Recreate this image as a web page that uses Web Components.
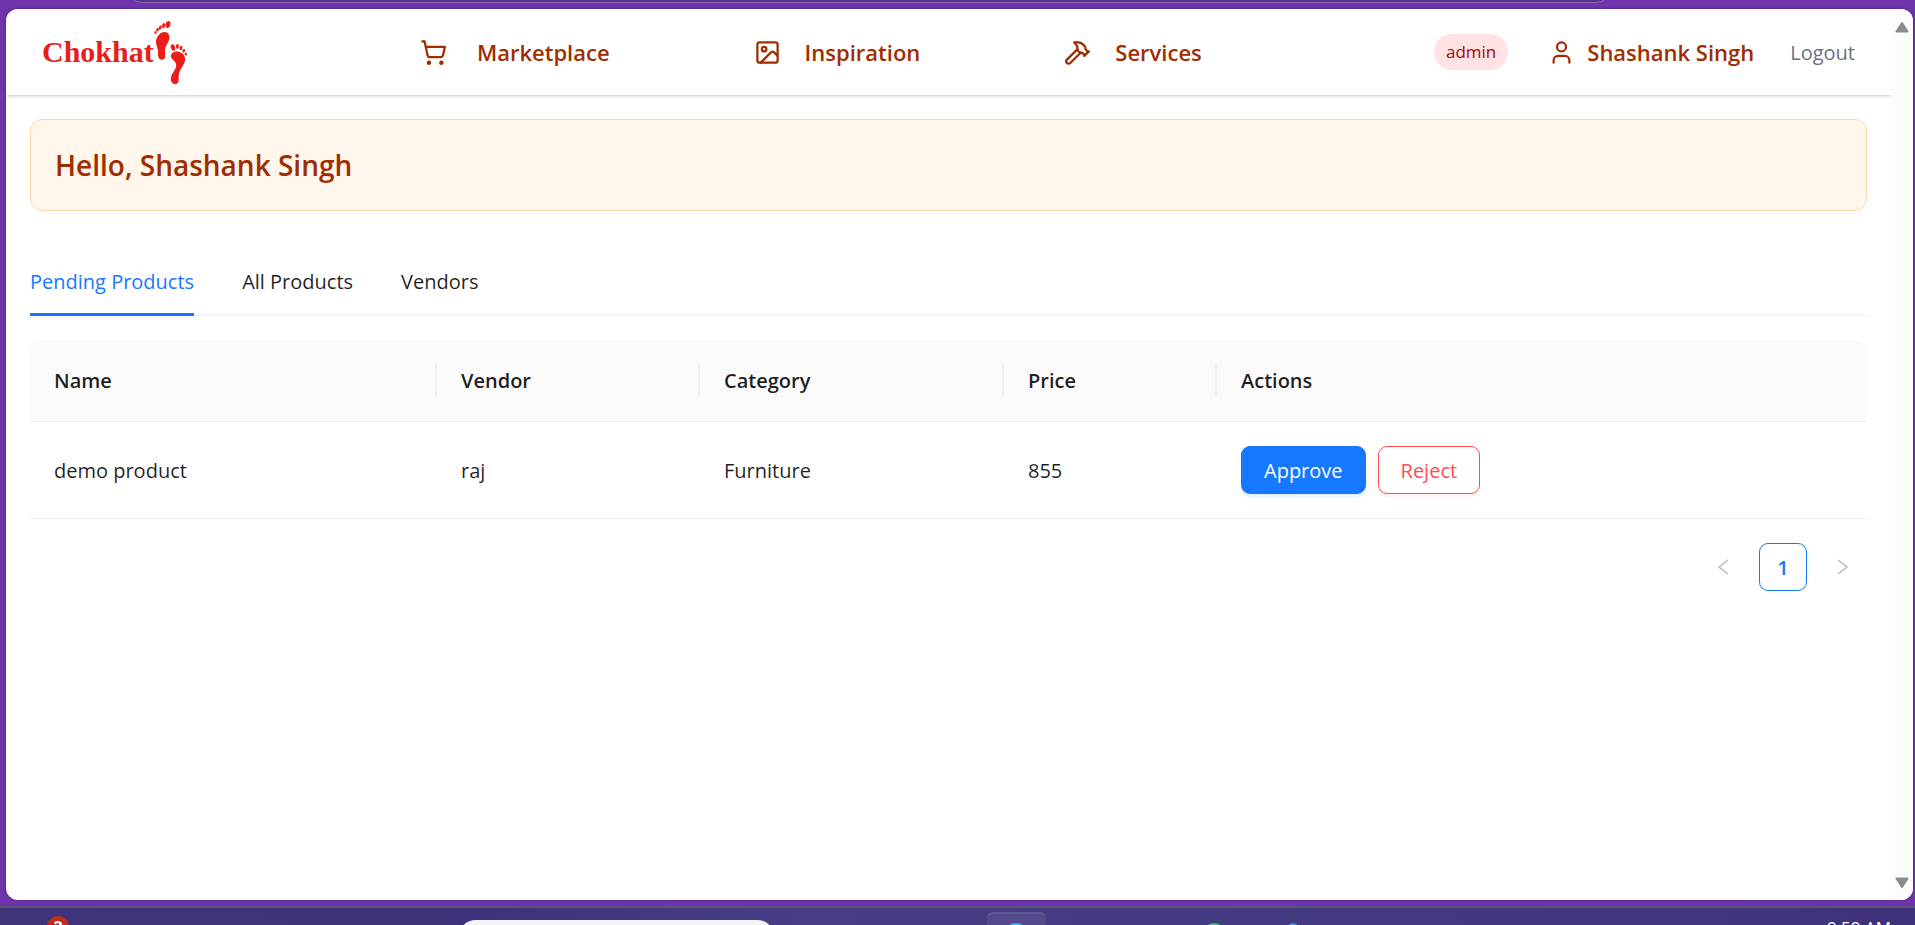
<!DOCTYPE html>
<html lang="en">
<head>
<meta charset="utf-8">
<title>Chokhat - Admin dashboard</title>
<style>
  html, body { margin: 0; height: 100%; }
  body { font-family: "Open Sans", "Noto Sans", sans-serif; color: rgba(0,0,0,.88); overflow: hidden; }
</style>
</head>
<body>
<app-shell>
  <site-header slot="page"></site-header>
  <main slot="page">
    <greeting-banner>Hello, Shashank Singh</greeting-banner>
    <product-tabs></product-tabs>
    <product-table></product-table>
    <page-nav></page-nav>
  </main>
  <task-bar slot="taskbar"></task-bar>
</app-shell>

<script>
const define = (name, html) => customElements.define(name, class extends HTMLElement {
  constructor() {
    super();
    const t = document.createElement('template');
    t.innerHTML = html;
    this.attachShadow({ mode: 'open' }).appendChild(t.content.cloneNode(true));
  }
});

define('app-shell', `
<style>
  :host { display: flex; flex-direction: column; height: 100vh; overflow: hidden; background: #6f34ab; }
  .frame { height: 9px; overflow: hidden; display: flex; align-items: flex-end; }
  .address { flex: 1; height: 32px; margin: 0 303px 6px 126px; box-sizing: border-box; background: #5b2f8e; border: 1px solid #8b6caf; border-radius: 16px; }
  .view { flex: 1; min-height: 0; display: flex; margin: 0 2px 6px 6px; background: #fff; border-radius: 12px; overflow: hidden; box-shadow: 0 0 3px rgba(40,10,80,.5); }
  .page { flex: 1; min-width: 0; }
  .scroll { width: 22px; background: #fcfcfc; display: flex; flex-direction: column; justify-content: space-between; align-items: center; padding: 12px 0 11px; box-sizing: border-box; }
  svg { display: block; }
  ::slotted(main) { display: block; padding: 24px 24px 0; }
</style>
<div class="frame" aria-hidden="true"><div class="address"></div></div>
<div class="view">
  <div class="page"><slot name="page"></slot></div>
  <div class="scroll" aria-hidden="true">
    <svg width="14" height="12" viewBox="0 0 14 12"><path d="M7 2 L12.500 10.500 H1.500 Z" fill="#8b8b8b" stroke="#8b8b8b" stroke-width="2" stroke-linejoin="round"/></svg>
    <svg width="14" height="12" viewBox="0 0 14 12"><path d="M7 10 L12.500 1.500 H1.500 Z" fill="#8b8b8b" stroke="#8b8b8b" stroke-width="2" stroke-linejoin="round"/></svg>
  </div>
</div>
<slot name="taskbar"></slot>`);

define('brand-logo', `
<style>
  :host { display: block; }
  a { display: flex; align-items: center; text-decoration: none; color: #ea1d18; height: 64px; }
  span { font: bold 30px/36px "Liberation Serif", serif; }
  svg { display: block; }
</style>
<a href="#"><span>Chokhat</span>
<svg width="34" height="64" viewBox="0 0 34 64" fill="#ea1d18" aria-hidden="true">
  <path d="M2 21C3 12 13 9 15 15C17 21 11 25 11 30C11 34 12 38 10 39C7 41 4 39 4 35C5 30 2 26 2 21Z"/>
  <ellipse cx="14" cy="4.500" rx="2.400" ry="3.600" transform="rotate(12 14 4.500)"/>
  <ellipse cx="9.600" cy="5.500" rx="1.500" ry="2.500" transform="rotate(15 9.600 5.500)"/>
  <ellipse cx="6.200" cy="7.500" rx="1.400" ry="2.200" transform="rotate(25 6.200 7.500)"/>
  <ellipse cx="3.500" cy="9.800" rx="1.300" ry="1.800" transform="rotate(30 3.500 9.800)"/>
  <ellipse cx="1.500" cy="12.500" rx="1.100" ry="1.500"/>
  <path d="M17 35C19 29 30 31 31 38C32 44 26 48 25 54C24 58 26 63 22 64C18 65 16 60 17 57C19 51 23 49 22 44C21 40 16 39 17 35Z"/>
  <ellipse cx="19" cy="27.500" rx="2.200" ry="3.300" transform="rotate(-15 19 27.500)"/>
  <ellipse cx="23.400" cy="26.500" rx="1.500" ry="2.400"/>
  <ellipse cx="27" cy="28" rx="1.400" ry="2.200" transform="rotate(10 27 28)"/>
  <ellipse cx="29.800" cy="30.700" rx="1.300" ry="1.800" transform="rotate(20 29.800 30.700)"/>
  <ellipse cx="31.800" cy="34" rx="1.200" ry="1.500"/>
</svg></a>`);

define('nav-link', `
<style>
  :host { display: block; }
  a { display: flex; align-items: center; gap: var(--gap, 24px); color: #9f2d00; text-decoration: none; font-size: 22px; font-weight: 600; line-height: 36px; white-space: nowrap; }
  ::slotted(svg) { display: block; width: 27px; height: 27px; fill: none; stroke: currentColor; stroke-width: 2; stroke-linecap: round; stroke-linejoin: round; }
</style>
<a href="#"><slot name="icon"></slot><slot></slot></a>`);

define('site-header', `
<style>
  :host { display: block; background: #fff; box-shadow: 0 1px 5px rgba(0,0,0,.12), 0 1px 2px rgba(0,0,0,.12); }
  header { display: flex; align-items: center; justify-content: space-between; height: 86px; padding: 0 36px; box-sizing: border-box; }
  nav { display: flex; gap: 144px; }
  nav nav-link:first-child { --gap: 30px; }
  .user { display: flex; align-items: center; }
  .role { padding: 0 12px; border-radius: 18px; background: #ffe2e2; color: #9f0712; font-size: 17px; line-height: 36px; }
  .user nav-link { --gap: 12px; margin: 0 36px 0 40px; }
  button { border: 0; padding: 2px 0 0; background: none; font: 20px/36px "Open Sans", sans-serif; color: #6a7282; }
</style>
<header>
  <brand-logo></brand-logo>
  <nav aria-label="Main">
    <nav-link><svg slot="icon" viewBox="0 0 24 24"><circle cx="8" cy="21" r="1"/><circle cx="19" cy="21" r="1"/><path d="M2.050 2.050h2l2.660 12.420a2 2 0 0 0 2 1.580h9.780a2 2 0 0 0 1.950-1.570l1.650-7.430H5.120"/></svg>Marketplace</nav-link>
    <nav-link><svg slot="icon" viewBox="0 0 24 24"><rect x="3" y="3" width="18" height="18" rx="2"/><circle cx="9" cy="9" r="2"/><path d="m21 15-3.086-3.086a2 2 0 0 0-2.828 0L6 21"/></svg>Inspiration</nav-link>
    <nav-link><svg slot="icon" viewBox="0 0 24 24"><path d="m15 12-9.373 9.373a1 1 0 0 1-3.001-3L12 9"/><path d="m18 15 4-4"/><path d="m21.500 11.500-1.914-1.914A2 2 0 0 1 19 8.172v-.344a2 2 0 0 0-.586-1.414l-1.657-1.657A6 6 0 0 0 12.516 3H9l1.243 1.243A6 6 0 0 1 12 8.485V10l2 2h1.172a2 2 0 0 1 1.414.586L18.500 14.500"/></svg>Services</nav-link>
  </nav>
  <div class="user">
    <span class="role">admin</span>
    <nav-link><svg slot="icon" viewBox="0 0 24 24"><path d="M19 21v-2a4 4 0 0 0-4-4H9a4 4 0 0 0-4 4v2"/><circle cx="12" cy="7" r="4"/></svg>Shashank Singh</nav-link>
    <button type="button">Logout</button>
  </div>
</header>`);

define('greeting-banner', `
<style>
  :host { display: block; padding: 24px; border: 1px solid #ffd6a8; border-radius: 12px; background: #fff6ec; }
  h1 { margin: 0; font-size: 28px; line-height: 42px; font-weight: 600; color: #9f2d00; }
</style>
<h1><slot></slot></h1>`);

define('product-tabs', `
<style>
  :host { display: block; margin: 36px 0 24px; border-bottom: 1px solid #f0f0f0; }
  div { display: flex; gap: 48px; }
  button { border: 0; border-bottom: 3px solid transparent; margin-bottom: -1px; padding: 18px 0 15px; background: none; color: inherit; font: 20px/33px "Open Sans", sans-serif; }
  button[aria-selected=true] { color: #1677ff; border-color: #1677ff; }
</style>
<div role="tablist">
  <button type="button" role="tab" aria-selected="true">Pending Products</button>
  <button type="button" role="tab" aria-selected="false">All Products</button>
  <button type="button" role="tab" aria-selected="false">Vendors</button>
</div>`);

define('action-button', `
<style>
  :host { display: inline-block; }
  button { display: block; height: 48px; padding: 0 22px; border: 1px solid #1677ff; border-radius: 9px; background: #1677ff; color: #fff; font: 20px/33px "Open Sans", sans-serif; box-shadow: 0 3px 0 rgba(5,145,255,.1); }
  :host([danger]) button { border-color: #ff4d4f; background: #fff; color: #ff4d4f; box-shadow: 0 3px 0 rgba(255,38,5,.06); }
</style>
<button type="button"><slot></slot></button>`);

define('product-table', `
<style>
  :host { display: block; }
  table { width: 100%; table-layout: fixed; border-collapse: separate; border-spacing: 0; font-size: 20px; line-height: 33px; }
  th, td { padding: 24px; text-align: left; border-bottom: 1px solid #f0f0f0; }
  th { background: #fafafa; font-weight: 600; position: relative; }
  th:first-child { border-top-left-radius: 12px; }
  th:last-child { border-top-right-radius: 12px; }
  th:not(:last-child)::after { content: ""; position: absolute; right: 0; top: 23px; width: 2px; height: 34px; background: #f0f0f0; }
  .actions { display: flex; gap: 12px; }
</style>
<table>
  <colgroup><col style="width:407px"><col style="width:263px"><col style="width:304px"><col style="width:213px"><col></colgroup>
  <thead><tr><th scope="col">Name</th><th scope="col">Vendor</th><th scope="col">Category</th><th scope="col">Price</th><th scope="col">Actions</th></tr></thead>
  <tbody><tr><td>demo product</td><td>raj</td><td>Furniture</td><td>855</td>
    <td><div class="actions"><action-button>Approve</action-button><action-button danger>Reject</action-button></div></td></tr></tbody>
</table>`);

define('page-nav', `
<style>
  :host { display: block; margin-top: 24px; }
  nav { display: flex; justify-content: flex-end; gap: 12px; }
  button { display: flex; align-items: center; justify-content: center; width: 48px; height: 48px; padding: 0; border: 0; border-radius: 9px; background: none; color: #b8b8b8; font: 600 20px/33px "Open Sans", sans-serif; }
  button[aria-current] { border: 1px solid #1677ff; color: #1677ff; background: #fff; }
  svg { display: block; fill: none; stroke: currentColor; stroke-width: 1.5; }
</style>
<nav aria-label="Pagination">
  <button type="button" aria-label="Previous page" disabled><svg width="12" height="16" viewBox="0 0 12 16"><path d="M11 1 L2 8 L11 15"/></svg></button>
  <button type="button" aria-current="page">1</button>
  <button type="button" aria-label="Next page" disabled><svg width="12" height="16" viewBox="0 0 12 16"><path d="M1 1 L10 8 L1 15"/></svg></button>
</nav>`);

define('task-bar', `
<style>
  :host { display: block; height: 17px; overflow: hidden; border-top: 2px solid #5a5578; background: linear-gradient(90deg, #3f3379, #3e327a 25%, #463f85 42%, #433b82 60%, #3f3880 85%, #3e327a); }
  div { display: grid; grid-template-columns: 47fr 22px 388fr 317px 212fr 59px 157fr 22px 62fr 12px 527fr auto 24px; align-items: start; }
  .badge { grid-column: 2; margin-top: 8px; height: 22px; border-radius: 11px; background: #c42b1c; color: #fff; font: bold 16px/22px "Open Sans", sans-serif; text-align: center; }
  input { grid-column: 4; margin: 12px 0 0; width: 100%; height: 48px; box-sizing: border-box; border: 0; border-radius: 18px; background: #f4f3fa; }
  .tile { grid-column: 6; margin-top: 4px; height: 60px; border-radius: 6px; background: #524a8d; border-top: 2px solid #5f5896; box-sizing: border-box; display: flex; justify-content: center; }
  .tile i { width: 26px; height: 26px; margin-top: 9px; border-radius: 13px; background: #2fb8e8; }
  .green { grid-column: 8; margin-top: 15px; height: 22px; border-radius: 11px; background: #35c37a; }
  .blue { grid-column: 10; margin-top: 15px; height: 12px; border-radius: 6px; background: #2e9fe0; }
  time { grid-column: 12; margin-top: 8px; font-size: 17px; line-height: 24px; color: #fff; }
</style>
<div>
  <span class="badge">2</span>
  <input type="search" aria-label="Search">
  <span class="tile"><i></i></span>
  <span class="green"></span>
  <span class="blue"></span>
  <time>9:59 AM</time>
</div>`);
</script>
</body>
</html>
